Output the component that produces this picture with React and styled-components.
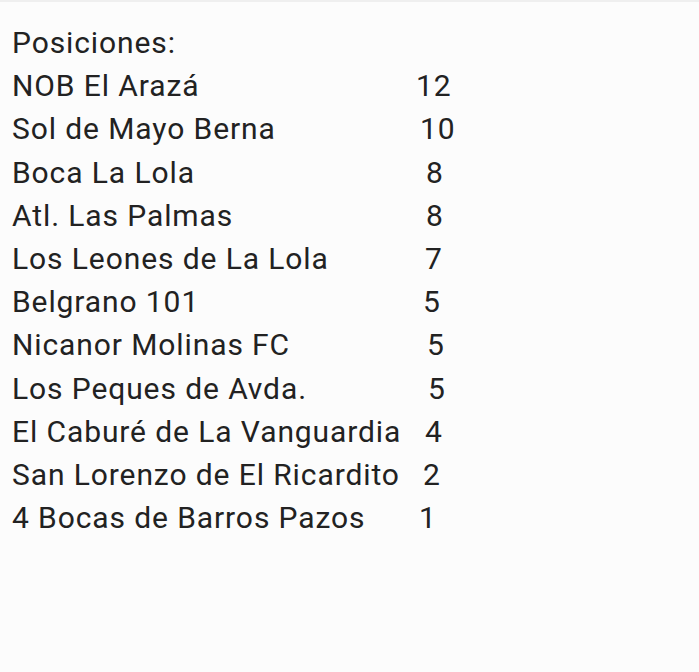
import React from 'react';
import styled, { createGlobalStyle } from 'styled-components';

const Global = createGlobalStyle`
  html, body {
    margin: 0;
    padding: 0;
    background: #fcfcfc;
  }
`

const Pagina = styled.div`
  min-height: 672px;
  background: #fcfcfc;
  border-top: 2px solid #efefef;
  box-sizing: border-box;
  padding: 19px 0 0 12px;
  font-family: Roboto, "Noto Sans", sans-serif;
  font-size: 30px;
  letter-spacing: 0.9px;
  line-height: 43.2px;
  color: #222222;
`

const Titulo = styled.div``

const Fila = styled.div`
  display: grid;
  grid-template-columns: 404px auto;
`

const Puntos = styled.span`
  padding-left: ${props => props.corrido}px;
`

const tabla = [
  { equipo: 'NOB El Arazá', puntos: 12, corrido: 0 },
  { equipo: 'Sol de Mayo Berna', puntos: 10, corrido: 4 },
  { equipo: 'Boca La Lola', puntos: 8, corrido: 10 },
  { equipo: 'Atl. Las Palmas', puntos: 8, corrido: 10 },
  { equipo: 'Los Leones de La Lola', puntos: 7, corrido: 9 },
  { equipo: 'Belgrano 101', puntos: 5, corrido: 7 },
  { equipo: 'Nicanor Molinas FC', puntos: 5, corrido: 11 },
  { equipo: 'Los Peques de Avda.', puntos: 5, corrido: 12 },
  { equipo: 'El Caburé de La Vanguardia', puntos: 4, corrido: 9 },
  { equipo: 'San Lorenzo de El Ricardito', puntos: 2, corrido: 7 },
  { equipo: '4 Bocas de Barros Pazos', puntos: 1, corrido: 3 },
]

const App = () => {
  return (
    <Pagina>
      <Global />
      <Titulo>Posiciones:</Titulo>
      {tabla.map((fila) => (
        <Fila key={fila.equipo}>
          <span>{fila.equipo}</span>
          <Puntos corrido={fila.corrido}>{fila.puntos}</Puntos>
        </Fila>
      ))}
    </Pagina>
  )
}

export default App
